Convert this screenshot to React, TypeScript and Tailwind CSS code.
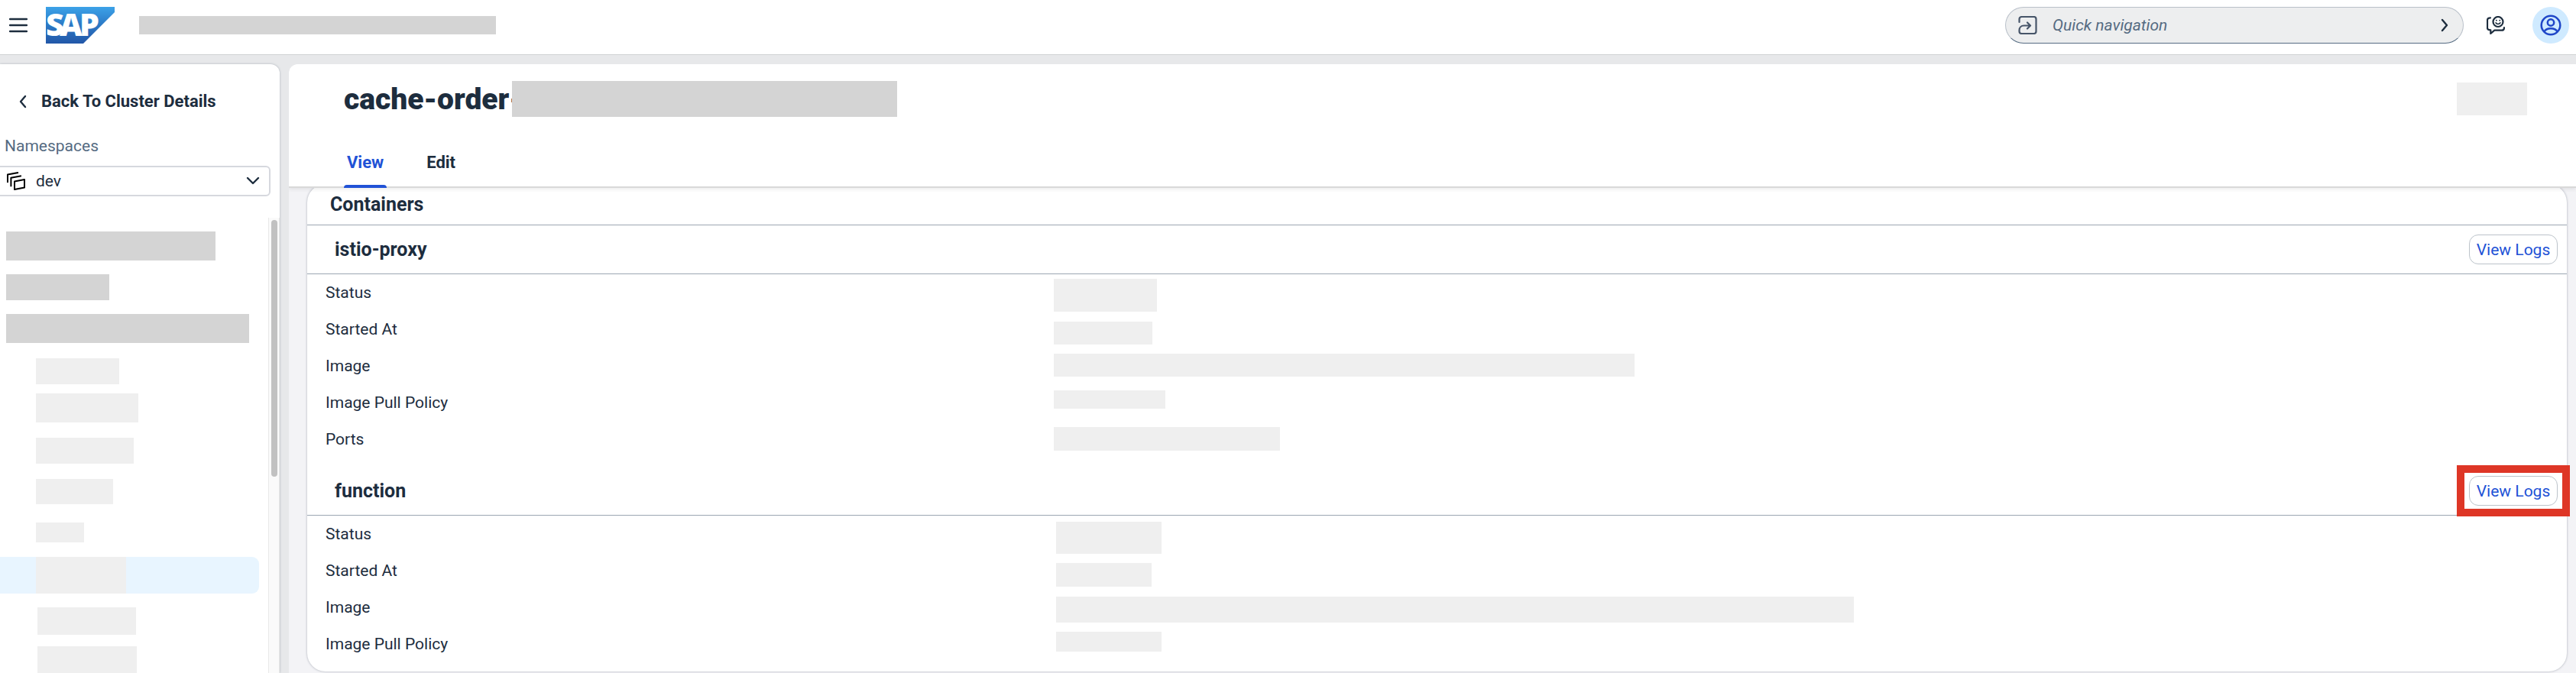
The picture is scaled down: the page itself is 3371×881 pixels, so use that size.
import React from "react";

type ValueRow = { label: string; bar: string };

const istioRows: ValueRow[] = [
  { label: "Status", bar: "mt-1.5 h-[43px] w-[135px]" },
  { label: "Started At", bar: "mt-3.5 h-[30px] w-[129px]" },
  { label: "Image", bar: "mt-2 h-[30px] w-[760px]" },
  { label: "Image Pull Policy", bar: "mt-2 h-6 w-[146px]" },
  { label: "Ports", bar: "mt-2 h-[31px] w-[296px]" },
];

const functionRows: ValueRow[] = [
  { label: "Status", bar: "mt-2 h-[42px] w-[138px]" },
  { label: "Started At", bar: "mt-3.5 h-[31px] w-[125px]" },
  { label: "Image", bar: "mt-2.5 h-[34px] w-[1044px]" },
  { label: "Image Pull Policy", bar: "mt-2 h-[26px] w-[138px]" },
];

const navBars = [
  "ml-2 h-[38px] w-[274px] bg-[#d4d4d4]",
  "ml-2 mt-[18px] h-[34px] w-[135px] bg-[#d4d4d4]",
  "ml-2 mt-[18px] h-[38px] w-[318px] bg-[#d4d4d4]",
  "ml-[47px] mt-5 h-[34px] w-[109px] bg-[#efefef]",
  "ml-[47px] mt-3 h-[38px] w-[134px] bg-[#efefef]",
  "ml-[47px] mt-5 h-[34px] w-32 bg-[#efefef]",
  "ml-[47px] mt-5 h-[33px] w-[101px] bg-[#efefef]",
  "ml-[47px] mt-6 h-[26px] w-[63px] bg-[#efefef]",
];

function SapLogo() {
  return (
    <svg width="90" height="48" viewBox="0 0 90 48" role="img" aria-label="SAP" className="overflow-visible">
      <defs>
        <linearGradient id="sap-blue" x1="0" y1="0" x2="0" y2="1">
          <stop offset="0" stopColor="#3ca2e8" />
          <stop offset="0.5" stopColor="#2b78c5" />
          <stop offset="1" stopColor="#2257a8" />
        </linearGradient>
      </defs>
      <path d="M0 0H90V7L49 48H0Z" fill="url(#sap-blue)" />
      <g fill="#fff" fontFamily="'Open Sans', sans-serif" fontWeight="800" fontSize="41">
        <text x="0" y="38">S</text>
        <text x="18" y="38">A</text>
        <text x="44" y="38">P</text>
      </g>
    </svg>
  );
}

function NamespaceIcon() {
  return (
    <svg width="24" height="24" viewBox="0 0 24 24" fill="none" stroke="#000" strokeWidth="2" strokeLinejoin="round">
      <path d="M1 14V3.4L15 .9M5.4 19.3V7.8L18.9 5.3M10 23V12.6L23 10V20.4Z" />
    </svg>
  );
}

function NavigateIcon() {
  return (
    <svg width="25" height="24" viewBox="0 0 25 24" fill="none" stroke="#475569" strokeWidth="2.2" strokeLinecap="round" strokeLinejoin="round">
      <path d="M1.5 8V4a3 3 0 0 1 3-3h16a3 3 0 0 1 3 3v16a3 3 0 0 1-3 3h-16a3 3 0 0 1-3-3v-1.5c0-3.5 2.5-6 6-6h8M12 8.5l4 4-4 4" />
    </svg>
  );
}

function FeedbackIcon() {
  return (
    <svg width="24" height="24" viewBox="0 0 24 24" fill="none" stroke="#1d2d3e" strokeWidth="2.2" strokeLinecap="round" strokeLinejoin="round">
      <path d="M5 2.3C2.5 2.3 1 3.3 1 5.5V15.5c0 2 1.2 2.8 4.3 2.8V23l5-4.3H20c2 0 3-1.3 3-3.7" />
      <circle cx="15" cy="7.5" r="6.5" />
      <path d="M12 8.8c1.4 2.2 4.6 2.2 6 0" strokeWidth="1.6" />
      <path d="M12.8 5.7h.1M17.2 5.7h.1" strokeWidth="1.8" />
    </svg>
  );
}

function UserIcon() {
  return (
    <svg width="28" height="28" viewBox="0 0 28 28" fill="none" stroke="#1f46c8" strokeWidth="2.5">
      <circle cx="14" cy="14" r="12.3" />
      <circle cx="14" cy="10.5" r="4.2" />
      <path d="M5.5 22.5c1.5-3.3 4.5-4.3 8.5-4.3s7 1 8.5 4.3" />
    </svg>
  );
}

function Chevron({ d, className }: { d: string; className?: string }) {
  return (
    <svg width="18" height="18" viewBox="0 0 18 18" fill="none" stroke="#1d2d3e" strokeWidth="2.4" strokeLinecap="round" strokeLinejoin="round" className={className}>
      <path d={d} />
    </svg>
  );
}

function ContainerSection({ name, rows, values, highlighted }: { name: string; rows: ValueRow[]; values?: string; highlighted?: boolean }) {
  return (
    <section>
      <div className="flex h-16 items-center justify-between border-b border-[#9ca6b2] pl-9 pr-3">
        <h3 className="text-[25px] font-bold">{name}</h3>
        <div className="relative flex">
          <button type="button" className="h-[39px] w-[116px] rounded-xl border border-[#bcc3ca] bg-white text-[#2152d6]">
            View Logs
          </button>
          {highlighted && <span className="pointer-events-none absolute -inset-x-4 -inset-y-3.5 border-[10px] border-[#de3626]" />}
        </div>
      </div>
      <dl>
        {rows.map((row) => (
          <div key={row.label} className="grid h-12 grid-cols-[32.75%_1fr] px-6">
            <dt className="leading-[48px]">{row.label}</dt>
            <dd className={values}>
              <div className={`bg-[#efefef] ${row.bar}`} />
            </dd>
          </div>
        ))}
      </dl>
    </section>
  );
}

export default function App() {
  return (
    <div className="flex h-screen flex-col overflow-hidden bg-[#e7e8ea] font-['Roboto','Liberation_Sans',sans-serif] text-[21px] leading-7 text-[#1d2d3e]">
      <header className="flex h-[72px] shrink-0 items-center border-b border-[#d0d2d4] bg-white pb-[5px] pl-3 pr-[9px]">
        <button type="button" aria-label="Menu" className="mr-6">
          <svg width="24" height="20" viewBox="0 0 24 20" stroke="#1d2d3e" strokeWidth="2.4" strokeLinecap="round">
            <path d="M1 2h22M1 10h22M1 18h22" />
          </svg>
        </button>
        <a href="#home" className="mr-8">
          <SapLogo />
        </a>
        <div className="h-6 w-[467px] bg-[#d4d4d4]" />
        <label className="ml-auto flex h-12 w-[600px] items-center rounded-full border border-[#b9c0c9] border-b-[#556b82] bg-[#edeeef] pl-4 pr-[15px]">
          <NavigateIcon />
          <input aria-label="Quick navigation" placeholder="Quick navigation" className="ml-5 min-w-0 flex-1 bg-transparent italic outline-none placeholder:text-[#556b82]" />
          <Chevron d="M6 2l6 7-6 7" />
        </label>
        <button type="button" aria-label="Feedback" className="ml-[30px]">
          <FeedbackIcon />
        </button>
        <button type="button" aria-label="Account" className="ml-9 flex size-12 items-center justify-center rounded-full bg-[#cfeaff]">
          <UserIcon />
        </button>
      </header>

      <div className="flex min-h-0 flex-1 gap-3 pt-3">
        <aside className="flex w-[366px] shrink-0 flex-col overflow-hidden rounded-tr-xl bg-white pt-[35px] shadow-[0_0_3px_#a9b0b8]">
          <a href="#cluster" className="flex items-center pl-5 text-[22px] font-bold">
            <Chevron d="M13 2L7 9l6 7" className="mr-4" />
            Back To Cluster Details
          </a>
          <label htmlFor="namespace" className="mt-[30px] pl-1.5 text-[#556b82]">
            Namespaces
          </label>
          <div className="relative -ml-2 mr-3 mt-3">
            <select id="namespace" className="h-10 w-full appearance-none rounded-md border-2 border-[#d6d8de] bg-white pl-[53px]">
              <option>dev</option>
            </select>
            <span className="pointer-events-none absolute inset-y-0 left-[17px] flex items-center">
              <NamespaceIcon />
            </span>
            <span className="pointer-events-none absolute inset-y-0 right-3.5 flex items-center">
              <Chevron d="M2 5l7 7 7-7" />
            </span>
          </div>
          <div className="mt-7 flex min-h-0 flex-1">
            <nav className="min-w-0 flex-1 overflow-hidden pt-[18px]">
              {navBars.map((bar, i) => (
                <div key={i} className={bar} />
              ))}
              <div className="mr-3 mt-[19px] h-12 rounded-r-[9px] bg-[#e8f5ff]">
                <div className="ml-[47px] h-full w-[118px] bg-[#efefef]" />
              </div>
              <div className="ml-[49px] mt-[18px] h-9 w-[129px] bg-[#efefef]" />
              <div className="ml-[49px] mt-[15px] h-9 w-[130px] bg-[#efefef]" />
            </nav>
            <div className="w-[15px] border-x border-[#e8e8e8] bg-[#fafafa] px-[3px] pt-[3px]">
              <div className="h-[336px] w-2 rounded-full bg-[#c1c1c1]" />
            </div>
          </div>
        </aside>

        <main className="flex min-w-0 flex-1 flex-col overflow-hidden rounded-tl-xl bg-[#f3f3f6]">
          <div className="relative z-10 bg-white pl-[72px] pr-16 pt-[22px] shadow-[inset_0_-2px_0_#d9d9d9,0_2px_5px_#00000014]">
            <div className="flex h-[47px] items-center">
              <h1 className="w-[220px] whitespace-nowrap text-[39px] font-black leading-[44px]">cache-order-</h1>
              <div className="relative h-full w-[504px] bg-[#d4d4d4]" />
              <div className="ml-auto h-[43px] w-[92px] bg-[#efefef]" />
            </div>
            <div role="tablist" className="mt-[46px] flex gap-12 text-[22px]">
              <button type="button" role="tab" aria-selected="true" className="relative px-1 pb-[19px] font-bold text-[#2152d6]">
                View
                <span className="absolute inset-x-0 bottom-0 h-1 rounded-t bg-[#2152d6]" />
              </button>
              <button type="button" role="tab" aria-selected="false" className="px-1 pb-[19px] font-bold">
                Edit
              </button>
            </div>
          </div>
          <div className="min-h-0 flex-1 overflow-hidden pl-6 pr-3">
            <article className="-mt-[5px] rounded-3xl bg-white pb-3 shadow-[0_0_3px_#a4a9b3]">
              <div className="flex h-[54px] items-center border-b border-[#9ca6b2] pl-[30px]">
                <h2 className="text-[25px] font-bold">Containers</h2>
              </div>
              <div className="flex flex-col gap-3">
                <ContainerSection name="istio-proxy" rows={istioRows} />
                <ContainerSection name="function" rows={functionRows} values="pl-[3px]" highlighted />
              </div>
            </article>
          </div>
        </main>
      </div>
    </div>
  );
}
